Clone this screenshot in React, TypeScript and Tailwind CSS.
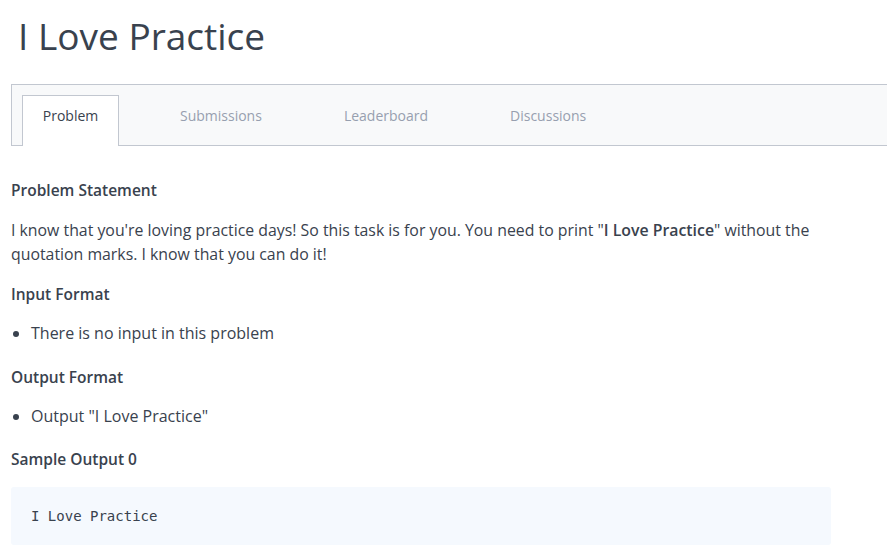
import React from "react";

export default function App() {
  const tabs = ["Problem", "Submissions", "Leaderboard", "Discussions"];
  return (
    <div
      className="w-[887px] h-[554px] overflow-hidden bg-white text-[#39424e]"
      style={{ fontFamily: '"Open Sans", "Noto Sans", sans-serif' }}
    >
      <h1 className="pl-[18px] pt-[12px] text-[37px] leading-[48px] font-normal text-[#39424e]">
        I Love Practice
      </h1>
      <div className="ml-[11px] mt-[24px] h-[62px] border border-r-0 border-[#c2c7d0] bg-[#f8f9fa] flex items-end pl-[10px]">
        {tabs.map((t, i) =>
          i === 0 ? (
            <div
              key={t}
              className="relative -mb-px h-[51px] w-[97px] bg-white border border-b-0 border-[#c2c7d0] flex justify-center pt-[10px] text-[14px] leading-[20px] font-normal text-[#39424e] mr-[40px]"
            >
              {t}
            </div>
          ) : (
            <div
              key={t}
              className="h-[50px] px-[21px] pt-[11px] text-[14px] leading-[20px] font-normal text-[#979faf] mr-[40px]"
            >
              {t}
            </div>
          )
        )}
      </div>
      <div className="ml-[11px] w-[820px] text-[16px] leading-[24px]">
        <h2 className="mt-[32px] text-[15.5px] font-semibold">Problem Statement</h2>
        <p className="mt-[16px] text-[15.85px]">
          I know that you're loving practice days! So this task is for you. You need to print "
          <strong className="font-semibold">I Love Practice</strong>" without the quotation marks. I know that
          you can do it!
        </p>
        <h2 className="mt-[16px] text-[15.5px] font-semibold">Input Format</h2>
        <ul className="mt-[15px] list-disc pl-[20px]">
          <li>There is no input in this problem</li>
        </ul>
        <h2 className="mt-[20px] text-[15.5px] font-semibold">Output Format</h2>
        <ul className="mt-[15px] list-disc pl-[20px]">
          <li>Output "I Love Practice"</li>
        </ul>
        <h2 className="mt-[19px] text-[15.5px] font-semibold">Sample Output 0</h2>
        <div className="mt-[16px] h-[58px] rounded-[3px] bg-[#f5f9fe] flex items-center pl-[20px]">
          <pre
            className="text-[14px] leading-[20px] text-[#39424e]"
            style={{ fontFamily: '"DejaVu Sans Mono", monospace' }}
          >
            I Love Practice
          </pre>
        </div>
      </div>
    </div>
  );
}
